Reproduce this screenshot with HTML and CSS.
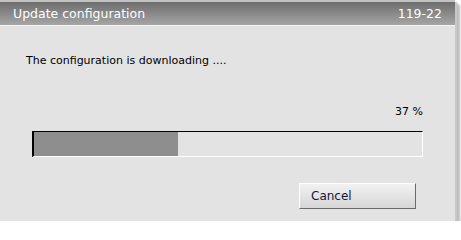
FILE: index.html
```html
<!DOCTYPE html>
<html>
<head>
<meta charset="utf-8">
<link rel="stylesheet" href="styles.css">
</head>
<body>
<div class="dialog">
  <div class="titlebar">
    <span class="title">Update configuration</span>
    <span class="code">119-22</span>
  </div>
  <div class="content">
    <p class="message">The configuration is downloading ....</p>
    <div class="percent">37 %</div>
    <div class="progress"><div class="fill" style="width:37%"></div></div>
    <div class="actions"><button class="btn">Cancel</button></div>
  </div>
</div>
</body>
</html>
```
FILE: styles.css
```css
html, body { margin: 0; padding: 0; background: #ffffff; }
body { font-family: "DejaVu Sans", Verdana, sans-serif; font-size: 11px; }
.dialog {
  width: 455px;
  height: 221px;
  background: #e3e3e3;
  box-shadow: 2px 2px 0 #c8c8c8, 4px 4px 2px #b8b8b8, 6px 6px 3px #d8d8d8;
  display: flex;
  flex-direction: column;
}
.titlebar {
  height: 23px;
  border-top: 2px solid #c2c2c2;
  border-bottom: 1px solid #f4f4f4;
  background: linear-gradient(#6c6c6c, #a6a6a6);
  display: flex;
  justify-content: space-between;
  align-items: center;
  padding: 0 13px 0 13px;
  color: #ffffff;
  font-size: 12.5px;
}
.content {
  padding: 0 32px 0 26px;
  display: flex;
  flex-direction: column;
}
.message { margin: 28px 0 0 0; color: #000; line-height: 14px; }
.percent { margin-top: 37px; text-align: right; line-height: 14px; color: #000; }
.progress {
  margin: 12px 0 0 6px;
  height: 24px;
  border-top: 1px solid #000;
  border-left: 2px solid #000;
  border-right: 1px solid #fff;
  border-bottom: 1px solid #fff;
  background: #e3e3e3;
}
.fill { height: 100%; background: #8e8e8e; }
.actions { display: flex; justify-content: flex-end; margin-top: 26px; padding-right: 7px; }
.btn {
  width: 117px;
  height: 26px;
  border: 1px solid;
  border-color: #ffffff #6a6a6a #6a6a6a #ffffff;
  background: linear-gradient(#f2f2f2, #d6d6d6);
  font-family: "DejaVu Sans", sans-serif;
  font-size: 12px;
  color: #151540;
  text-align: left;
  padding: 0 0 0 11px;
}
```
